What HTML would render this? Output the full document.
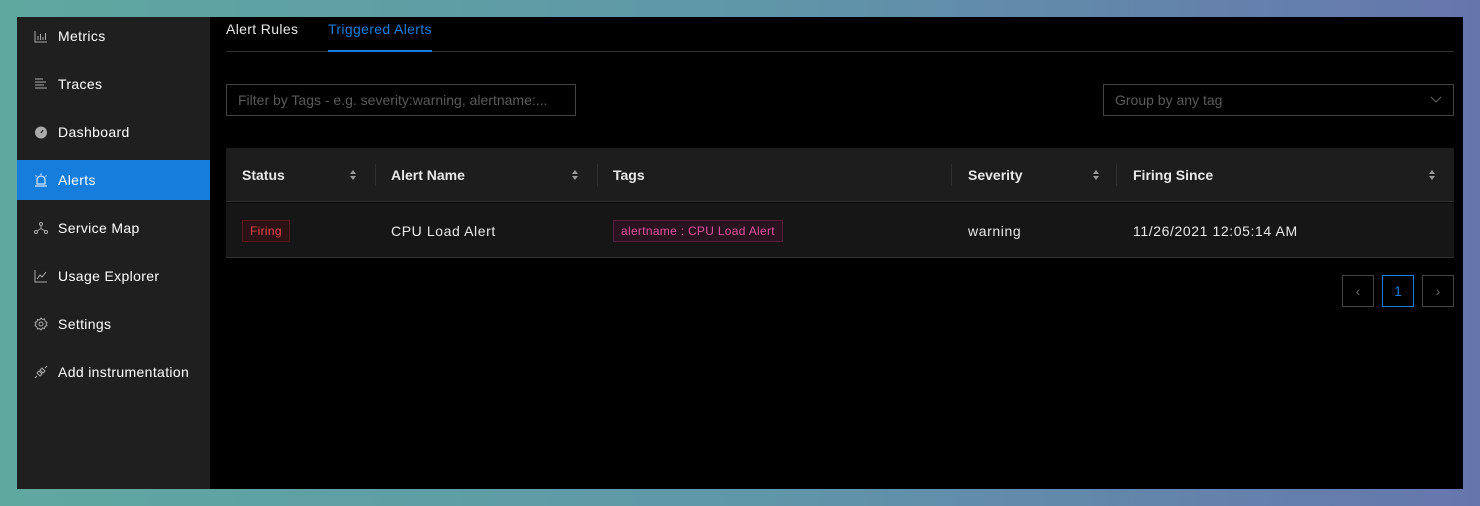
<!DOCTYPE html>
<html><head><style>
*{box-sizing:border-box;margin:0;padding:0}
body{width:1480px;height:506px;overflow:hidden;background:linear-gradient(90deg,#5fa8a0 0%,#5f97a8 50%,#6676ad 100%);font-family:"Liberation Sans",sans-serif;font-size:14px;position:relative}
.win{position:absolute;left:17px;top:17px;width:1446px;height:472px;background:#000;overflow:hidden}
.side{position:absolute;left:0;top:0;width:193px;height:472px;background:#1f1f1f}
.mi{position:absolute;left:0;width:193px;height:40px;color:#fff;font-size:14px;line-height:40px;padding-left:41px;letter-spacing:0.35px}
.mi.act{background:#177ddc}
.mi svg{position:absolute;left:17px;top:13px}
.abs{position:absolute}
.tab{position:absolute;top:4px;font-size:14px;letter-spacing:0.35px}
.inp{position:absolute;border:1px solid #434343;height:32px;color:#5a5a5a;line-height:30px;padding-left:11px;font-size:14px}
.th{position:absolute;top:0;height:54px;line-height:54px;color:#e8e8e8;font-weight:bold;font-size:14px}
.sep{position:absolute;top:16px;width:1px;height:22px;background:#303030}
.sort{position:absolute;top:21px;width:8px;height:12px}
.pg{position:absolute;top:258px;width:32px;height:32px;border:1px solid #434343;color:#666;text-align:center;line-height:30px}
.td{letter-spacing:0.6px}
</style></head><body>
<div class="win">
<div class="side">
<div class="mi" style="top:-1px"><svg width="14" height="14" viewBox="0 0 14 14" fill="none" stroke="#aaa" stroke-width="1"><path d="M1 2v11h12M4 11V7M6.5 11V5M9 11V8M11.5 11V4"/></svg>Metrics</div>
<div class="mi" style="top:47px"><svg width="14" height="14" viewBox="0 0 14 14" fill="none" stroke="#aaa" stroke-width="1"><path d="M1 2h8M1 5h11M1 8h9M1 11h12"/></svg>Traces</div>
<div class="mi" style="top:95px"><svg width="14" height="14" viewBox="0 0 14 14"><circle cx="7" cy="7.5" r="6" fill="#aaa"/><path d="M7 8l2-3" stroke="#1f1f1f" stroke-width="1.2"/></svg>Dashboard</div>
<div class="mi act" style="top:143px"><svg width="14" height="14" viewBox="0 0 14 14" fill="none" stroke="#fff" stroke-width="1"><path d="M3 11V7a4 4 0 018 0v4zM1 13h12M7 0.5v1.5M1.5 2.5l1 1M12.5 2.5l-1 1"/></svg>Alerts</div>
<div class="mi" style="top:191px"><svg width="14" height="14" viewBox="0 0 14 14" fill="none" stroke="#aaa" stroke-width="1"><circle cx="7" cy="3" r="1.5"/><circle cx="2" cy="11" r="1.5"/><circle cx="12" cy="11" r="1.5"/><path d="M7 4.5v3L3 10M7 7.5l4 2.5"/></svg>Service Map</div>
<div class="mi" style="top:239px"><svg width="14" height="14" viewBox="0 0 14 14" fill="none" stroke="#aaa" stroke-width="1"><path d="M1 1v12h12M3 10l3-4 2 2 4-5"/></svg>Usage Explorer</div>
<div class="mi" style="top:287px"><svg width="14" height="14" viewBox="0 0 14 14" fill="none" stroke="#aaa" stroke-width="1"><circle cx="7" cy="7" r="2"/><path d="M7 1l1.5 1.5 2-.5.5 2L13 5.5 12 7l1 1.5-2 1-.5 2-2-.5L7 13l-1.5-1.5-2 .5-.5-2L1 8.5 2 7 1 5.5l2-1 .5-2 2 .5z"/></svg>Settings</div>
<div class="mi" style="top:335px"><svg width="14" height="14" viewBox="0 0 14 14" fill="none" stroke="#aaa" stroke-width="1"><path d="M1 13l2-2M11 3l2-2M3 8l3 3 2-2-3-3zM6 5l3 3 2-2-3-3z"/></svg>Add instrumentation</div>
</div>
<div class="tab" style="left:209px;color:#e8e8e8">Alert Rules</div>
<div class="tab" style="left:311px;color:#177ddc">Triggered Alerts</div>
<div class="abs" style="left:209px;top:34px;width:1228px;height:1px;background:#303030"></div>
<div class="abs" style="left:311px;top:33px;width:104px;height:2px;background:#177ddc"></div>
<div class="inp" style="left:209px;top:67px;width:350px">Filter by Tags - e.g. severity:warning, alertname:...</div>
<div class="inp" style="left:1086px;top:67px;width:351px">Group by any tag<svg class="abs" style="right:11px;top:11px" width="12" height="8" viewBox="0 0 12 8" fill="none" stroke="#666"><path d="M1 1l5 5 5-5"/></svg></div>
<div class="abs" style="left:209px;top:131px;width:1228px;height:110px">
<div class="abs" style="left:0;top:0;width:1228px;height:54px;background:#1d1d1d;border-bottom:1px solid #303030"></div>
<div class="abs" style="left:0;top:55px;width:1228px;height:55px;background:#161616;border-bottom:1px solid #303030"></div>
<div class="th" style="left:16px">Status</div>
<div class="th" style="left:165px">Alert Name</div>
<div class="th" style="left:387px">Tags</div>
<div class="th" style="left:742px">Severity</div>
<div class="th" style="left:907px">Firing Since</div>
<div class="sep" style="left:149px"></div><div class="sep" style="left:371px"></div><div class="sep" style="left:725px"></div><div class="sep" style="left:890px"></div>
<svg class="sort" style="left:123px" viewBox="0 0 8 12" fill="#999"><path d="M4 1l3 4H1zM4 11l3-4H1z"/></svg>
<svg class="sort" style="left:345px" viewBox="0 0 8 12" fill="#999"><path d="M4 1l3 4H1zM4 11l3-4H1z"/></svg>
<svg class="sort" style="left:866px" viewBox="0 0 8 12" fill="#999"><path d="M4 1l3 4H1zM4 11l3-4H1z"/></svg>
<svg class="sort" style="left:1202px" viewBox="0 0 8 12" fill="#999"><path d="M4 1l3 4H1zM4 11l3-4H1z"/></svg>
<div class="abs" style="left:16px;top:72px;height:22px;padding:0 7px;line-height:20px;font-size:12px;color:#e84749;background:#2a1215;border:1px solid #58181c;letter-spacing:0.3px">Firing</div>
<div class="abs td" style="left:165px;top:72px;line-height:22px;color:#e8e8e8">CPU Load Alert</div>
<div class="abs" style="left:387px;top:72px;height:22px;padding:0 7px;line-height:20px;font-size:12px;color:#e0529c;background:#291321;border:1px solid #551c3b;letter-spacing:0.3px">alertname : CPU Load Alert</div>
<div class="abs td" style="left:742px;top:72px;line-height:22px;color:#e8e8e8">warning</div>
<div class="abs td" style="left:907px;top:72px;line-height:22px;color:#e8e8e8">11/26/2021 12:05:14 AM</div>
</div>
<div class="pg" style="left:1325px">&#8249;</div>
<div class="pg" style="left:1365px;border-color:#177ddc;color:#177ddc">1</div>
<div class="pg" style="left:1405px">&#8250;</div>
</div>
</body></html>
